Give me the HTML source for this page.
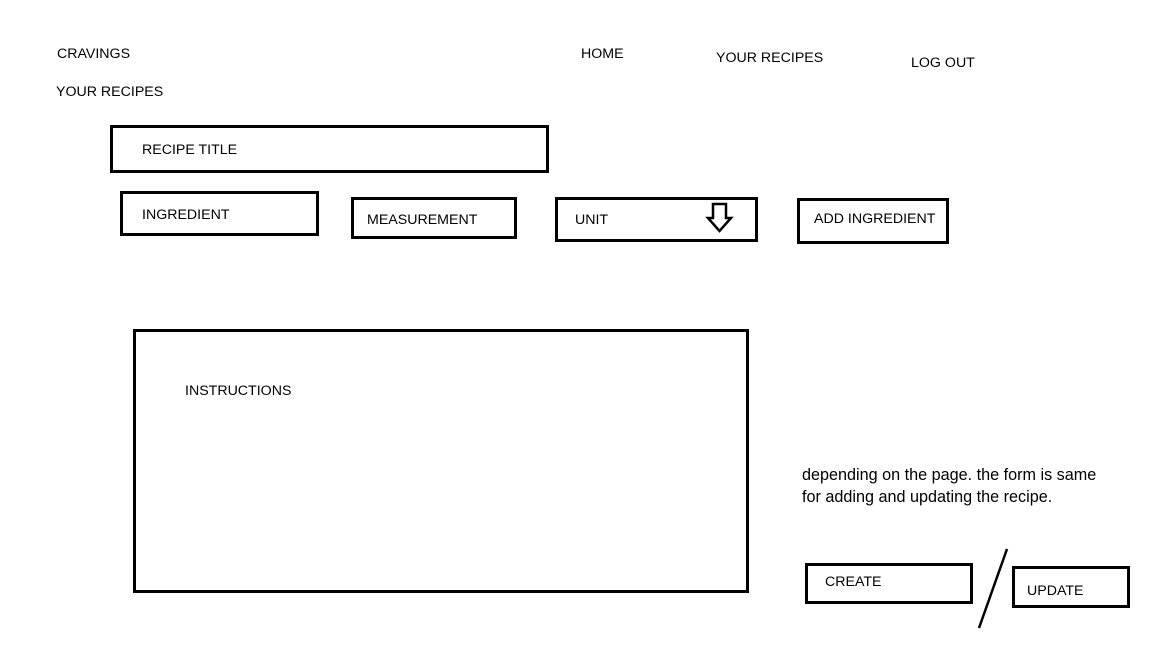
<!DOCTYPE html>
<html><head><style>
body{margin:0;width:1152px;height:648px;background:#fff;position:relative;overflow:hidden;font-family:"Liberation Sans",sans-serif;font-size:14.2px;color:#000}
.t{position:absolute;line-height:16px;white-space:nowrap}
.b{position:absolute;border:3px solid #000;box-sizing:border-box}
.l{font-size:16.2px}
</style></head><body>
<div class="t" style="left:57px;top:46px">CRAVINGS</div>
<div class="t" style="left:56px;top:84px">YOUR RECIPES</div>
<div class="t" style="left:581px;top:46px">HOME</div>
<div class="t" style="left:716px;top:50px">YOUR RECIPES</div>
<div class="t" style="left:911px;top:55px">LOG OUT</div>

<div class="b" style="left:110px;top:125px;width:439px;height:48px"></div>
<div class="t" style="left:142px;top:142px">RECIPE TITLE</div>
<div class="b" style="left:120px;top:191px;width:199px;height:45px"></div>
<div class="t" style="left:142px;top:207px">INGREDIENT</div>
<div class="b" style="left:351px;top:197px;width:166px;height:42px"></div>
<div class="t" style="left:367px;top:212px">MEASUREMENT</div>
<div class="b" style="left:555px;top:197px;width:203px;height:45px"></div>
<div class="t" style="left:575px;top:212px">UNIT</div>
<svg style="position:absolute;left:0;top:0" width="1152" height="648">
<path d="M713 204 H726 V218 H731 L719.5 231 L708 218 H713 Z" fill="none" stroke="#000" stroke-width="2.5"/>
<line x1="1007" y1="549" x2="979" y2="628" stroke="#000" stroke-width="2.5"/>
</svg>
<div class="b" style="left:797px;top:198px;width:152px;height:46px"></div>
<div class="t" style="left:814px;top:211px">ADD INGREDIENT</div>

<div class="b" style="left:133px;top:329px;width:616px;height:264px"></div>
<div class="t" style="left:185px;top:383px">INSTRUCTIONS</div>

<div class="t l" style="left:802px;top:467px">depending on the page. the form is same</div>
<div class="t l" style="left:802px;top:489px">for adding and updating the recipe.</div>

<div class="b" style="left:805px;top:563px;width:168px;height:41px"></div>
<div class="t" style="left:825px;top:574px">CREATE</div>
<div class="b" style="left:1012px;top:566px;width:118px;height:42px"></div>
<div class="t" style="left:1027px;top:583px">UPDATE</div>
</body></html>
